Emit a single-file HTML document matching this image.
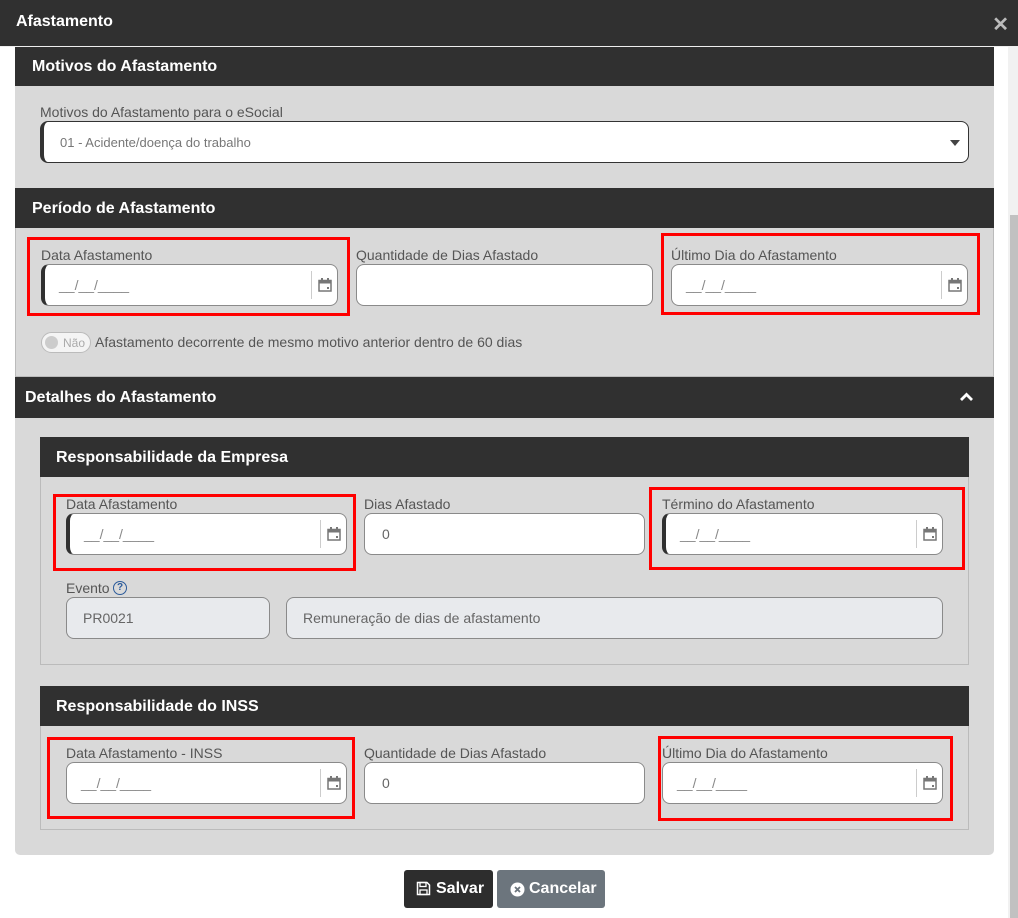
<!DOCTYPE html>
<html><head><meta charset="utf-8"><style>
*{box-sizing:border-box;margin:0;padding:0}
body{width:1018px;height:918px;background:#fff;font-family:"Liberation Sans",Arial,sans-serif;position:relative;overflow:hidden}
.a{position:absolute}
.dark{background:#303030;color:#fff;font-weight:bold;font-size:16px}
.grey{background:#d9d9d9}
.lbl{position:absolute;font-size:14px;color:#555;white-space:nowrap}
.inp{position:absolute;background:#fff;border:1px solid #8a8a8a;border-radius:8px;height:42px;font-size:14px;color:#666}
.lb{border-left:4px solid #303030}
.red{position:absolute;border:3px solid #f00}
.mask{position:absolute;left:14px;top:12px;font-size:14px;color:#888;letter-spacing:0px}
.cal{position:absolute;right:0;top:6px;width:26px;height:28px;border-left:1px solid #ccc}
.cal svg{position:absolute;left:6px;top:7px}
.dis{background:#e8eaed}
</style></head><body>
<div class="a dark" style="left:0;top:0;width:1018px;height:46px;padding:13px 16px;font-size:16px">Afastamento</div>
<div class="a" style="right:9px;top:12px;color:#bbb;font-size:20px;font-weight:bold">✕</div>
<div class="a" style="left:0;top:46px;width:1018px;height:1px;background:#eee"></div>
<div class="a" style="left:1008px;top:47px;width:10px;height:871px;background:#f1f1f1"></div>
<div class="a" style="left:1010px;top:215px;width:8px;height:703px;background:#c1c1c1"></div>

<div class="a grey" style="left:15px;top:47px;width:979px;height:808px;border-radius:0 0 5px 5px"></div>
<div class="a dark" style="left:15px;top:47px;width:979px;height:39px;padding:11px 17px">Motivos do Afastamento</div>
<div class="lbl" style="left:40px;top:104px">Motivos do Afastamento para o eSocial</div>
<div class="inp lb" style="left:40px;top:121px;width:929px;height:42px;border-color:#333"><span class="mask" style="left:16px;top:13px;font-size:13px;color:#777">01 - Acidente/doença do trabalho</span>
<div class="a" style="right:8px;top:18px;width:0;height:0;border-left:5px solid transparent;border-right:5px solid transparent;border-top:6px solid #444"></div></div>

<div class="a dark" style="left:15px;top:188px;width:979px;height:40px;padding:12px 17px">Período de Afastamento</div>
<div class="a" style="left:15px;top:228px;width:979px;height:149px;border:1px solid #bbb;border-top:none"></div>
<div class="red" style="left:27px;top:237px;width:323px;height:79px"></div>
<div class="lbl" style="left:41px;top:247px">Data Afastamento</div>
<div class="inp lb" style="left:41px;top:264px;width:297px"><span class="mask">__/__/____</span><div class="cal"><svg width="14" height="14" viewBox="0 0 14 14"><rect x="1" y="2.5" width="12" height="10.5" fill="none" stroke="#777" stroke-width="1.5"/><rect x="1" y="2.5" width="12" height="3" fill="#777"/><rect x="3" y="0" width="2" height="3" fill="#777"/><rect x="9" y="0" width="2" height="3" fill="#777"/><rect x="9" y="9" width="2" height="2" fill="#777"/></svg></div></div>
<div class="lbl" style="left:356px;top:247px">Quantidade de Dias Afastado</div>
<div class="inp" style="left:356px;top:264px;width:297px"></div>
<div class="red" style="left:661px;top:233px;width:319px;height:82px"></div>
<div class="lbl" style="left:671px;top:247px">Último Dia do Afastamento</div>
<div class="inp" style="left:671px;top:264px;width:297px"><span class="mask">__/__/____</span><div class="cal"><svg width="14" height="14" viewBox="0 0 14 14"><rect x="1" y="2.5" width="12" height="10.5" fill="none" stroke="#777" stroke-width="1.5"/><rect x="1" y="2.5" width="12" height="3" fill="#777"/><rect x="3" y="0" width="2" height="3" fill="#777"/><rect x="9" y="0" width="2" height="3" fill="#777"/><rect x="9" y="9" width="2" height="2" fill="#777"/></svg></div></div>
<div class="a" style="left:41px;top:332px;width:50px;height:21px;border:1px solid #bbb;border-radius:11px;background:#f4f4f4"><div class="a" style="left:3px;top:3px;width:13px;height:13px;border-radius:50%;background:#ccc"></div><span class="a" style="left:21px;top:3px;font-size:12px;color:#aaa">Não</span></div>
<div class="lbl" style="left:95px;top:334px">Afastamento decorrente de mesmo motivo anterior dentro de 60 dias</div>

<div class="a dark" style="left:15px;top:377px;width:979px;height:41px;padding:12px 10px">Detalhes do Afastamento</div>
<svg class="a" style="left:959px;top:391px" width="15" height="12" viewBox="0 0 15 12"><path d="M2 9 L7.5 3.5 L13 9" fill="none" stroke="#fff" stroke-width="2.8"/></svg>

<div class="a dark" style="left:40px;top:437px;width:929px;height:40px;padding:12px 16px">Responsabilidade da Empresa</div>
<div class="a" style="left:40px;top:477px;width:929px;height:188px;border:1px solid #bbb;border-top:none"></div>
<div class="red" style="left:53px;top:494px;width:303px;height:77px"></div>
<div class="lbl" style="left:66px;top:496px">Data Afastamento</div>
<div class="inp lb" style="left:66px;top:513px;width:281px"><span class="mask">__/__/____</span><div class="cal"><svg width="14" height="14" viewBox="0 0 14 14"><rect x="1" y="2.5" width="12" height="10.5" fill="none" stroke="#777" stroke-width="1.5"/><rect x="1" y="2.5" width="12" height="3" fill="#777"/><rect x="3" y="0" width="2" height="3" fill="#777"/><rect x="9" y="0" width="2" height="3" fill="#777"/><rect x="9" y="9" width="2" height="2" fill="#777"/></svg></div></div>
<div class="lbl" style="left:364px;top:496px">Dias Afastado</div>
<div class="inp" style="left:364px;top:513px;width:281px"><span class="mask" style="left:17px;color:#666">0</span></div>
<div class="red" style="left:649px;top:487px;width:316px;height:83px"></div>
<div class="lbl" style="left:662px;top:496px">Término do Afastamento</div>
<div class="inp lb" style="left:662px;top:513px;width:281px"><span class="mask">__/__/____</span><div class="cal"><svg width="14" height="14" viewBox="0 0 14 14"><rect x="1" y="2.5" width="12" height="10.5" fill="none" stroke="#777" stroke-width="1.5"/><rect x="1" y="2.5" width="12" height="3" fill="#777"/><rect x="3" y="0" width="2" height="3" fill="#777"/><rect x="9" y="0" width="2" height="3" fill="#777"/><rect x="9" y="9" width="2" height="2" fill="#777"/></svg></div></div>
<div class="lbl" style="left:66px;top:580px">Evento</div>
<div class="a" style="left:113px;top:581px;width:14px;height:14px;border:1.5px solid #2a5a9a;border-radius:50%;font-size:10px;font-weight:bold;color:#2a5a9a;text-align:center;line-height:11px">?</div>
<div class="inp dis" style="left:66px;top:597px;width:204px"><span class="mask" style="left:16px;color:#666">PR0021</span></div>
<div class="inp dis" style="left:286px;top:597px;width:657px"><span class="mask" style="left:16px;color:#666">Remuneração de dias de afastamento</span></div>

<div class="a dark" style="left:40px;top:686px;width:929px;height:40px;padding:12px 16px">Responsabilidade do INSS</div>
<div class="a" style="left:40px;top:726px;width:929px;height:104px;border:1px solid #bbb;border-top:none"></div>
<div class="red" style="left:47px;top:737px;width:308px;height:82px"></div>
<div class="lbl" style="left:66px;top:745px">Data Afastamento - INSS</div>
<div class="inp" style="left:66px;top:762px;width:281px"><span class="mask">__/__/____</span><div class="cal"><svg width="14" height="14" viewBox="0 0 14 14"><rect x="1" y="2.5" width="12" height="10.5" fill="none" stroke="#777" stroke-width="1.5"/><rect x="1" y="2.5" width="12" height="3" fill="#777"/><rect x="3" y="0" width="2" height="3" fill="#777"/><rect x="9" y="0" width="2" height="3" fill="#777"/><rect x="9" y="9" width="2" height="2" fill="#777"/></svg></div></div>
<div class="lbl" style="left:364px;top:745px">Quantidade de Dias Afastado</div>
<div class="inp" style="left:364px;top:762px;width:281px"><span class="mask" style="left:17px;color:#666">0</span></div>
<div class="red" style="left:658px;top:736px;width:295px;height:85px"></div>
<div class="lbl" style="left:662px;top:745px">Último Dia do Afastamento</div>
<div class="inp" style="left:662px;top:762px;width:281px"><span class="mask">__/__/____</span><div class="cal"><svg width="14" height="14" viewBox="0 0 14 14"><rect x="1" y="2.5" width="12" height="10.5" fill="none" stroke="#777" stroke-width="1.5"/><rect x="1" y="2.5" width="12" height="3" fill="#777"/><rect x="3" y="0" width="2" height="3" fill="#777"/><rect x="9" y="0" width="2" height="3" fill="#777"/><rect x="9" y="9" width="2" height="2" fill="#777"/></svg></div></div>

<div class="a" style="left:404px;top:870px;width:89px;height:38px;background:#2d2d2d;border-radius:3px;color:#fff;font-weight:bold;font-size:16px;padding:10px 0 0 32px">Salvar
<svg class="a" style="left:12px;top:11px" width="15" height="15" viewBox="0 0 15 15"><path d="M1.5 1.5h9.5l2.5 2.5v9.5h-12z" fill="none" stroke="#fff" stroke-width="1.5"/><rect x="4" y="1.5" width="6" height="4" fill="none" stroke="#fff" stroke-width="1.3"/><rect x="4" y="9" width="7" height="4.5" fill="none" stroke="#fff" stroke-width="1.3"/></svg></div>
<div class="a" style="left:497px;top:870px;width:108px;height:38px;background:#6c757d;border-radius:3px;color:#fff;font-weight:bold;font-size:16px;padding:10px 0 0 32px">Cancelar
<svg class="a" style="left:13px;top:12px" width="15" height="15" viewBox="0 0 15 15"><circle cx="7.5" cy="7.5" r="7" fill="#fff"/><path d="M5 5l5 5M10 5l-5 5" stroke="#6c757d" stroke-width="1.8"/></svg></div>
</body></html>
